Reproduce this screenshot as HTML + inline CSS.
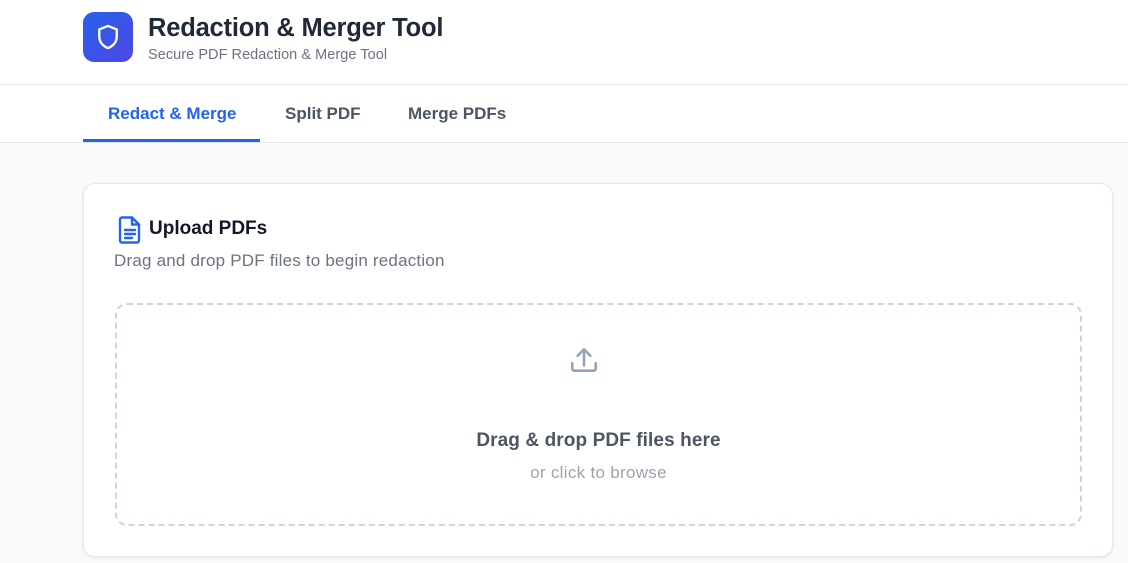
<!DOCTYPE html>
<html><head><meta charset="utf-8"><style>
*{box-sizing:border-box;margin:0;padding:0}
body{width:1128px;height:563px;overflow:hidden;background:#f8fafc;font-family:"Liberation Sans",sans-serif;position:relative}
.hdr{position:absolute;left:0;top:0;width:1128px;height:85px;background:#fff;border-bottom:1px solid #e5e7eb}
.logo{position:absolute;left:83px;top:12px;width:50px;height:50px;border-radius:11px;background:linear-gradient(135deg,#2563eb,#4f46e5)}
.logo svg{position:absolute;left:11px;top:11px}
.t1{position:absolute;left:148px;top:14px;font-size:25.5px;font-weight:bold;color:#1f2937;letter-spacing:-0.2px}
.t2{position:absolute;left:148px;top:47px;font-size:14.5px;color:#6b7280;letter-spacing:0.05px}
.nav{position:absolute;left:0;top:85px;width:1128px;height:58px;background:#fff;border-bottom:1px solid #e5e7eb}
.tab{position:absolute;top:19px;font-size:17px;font-weight:bold;color:#4b5563}
.ul{position:absolute;left:83px;top:54px;width:177px;height:3px;background:#2563eb}
.card{position:absolute;left:83px;top:183px;width:1030px;height:374px;background:#fff;border:1px solid #e2e8f0;border-radius:12px;box-shadow:0 1px 3px rgba(0,0,0,.08)}
.ct{position:absolute;left:65px;top:34px;font-size:19px;font-weight:bold;color:#111827}
.cs{position:absolute;left:30px;top:67px;font-size:17px;color:#6b7280;letter-spacing:0.2px}
.dz{position:absolute;left:31px;top:119px;width:967px;height:223px;border:2px dashed #cbd5e1;border-radius:12px}
.d1{position:absolute;left:0;width:100%;top:125px;text-align:center;font-size:19px;font-weight:bold;color:#4b5563;letter-spacing:0.1px}
.d2{position:absolute;left:0;width:100%;top:158px;text-align:center;font-size:17px;color:#9ca3af;letter-spacing:0.3px}
</style></head><body>
<div class="hdr">
<div class="logo"><svg width="28" height="28" viewBox="0 0 24 24" fill="none" stroke="#fff" stroke-width="2" stroke-linejoin="round"><path d="M12 2.5 4.5 5.5v6c0 4.8 3.2 8.3 7.5 10 4.3-1.7 7.5-5.2 7.5-10v-6z"/></svg></div>
<div class="t1">Redaction &amp; Merger Tool</div>
<div class="t2">Secure PDF Redaction &amp; Merge Tool</div>
</div>
<div class="nav">
<div class="tab" style="left:108px;color:#2563eb">Redact &amp; Merge</div>
<div class="tab" style="left:285px">Split PDF</div>
<div class="tab" style="left:408px">Merge PDFs</div>
<div class="ul"></div>
</div>
<div class="card">
<svg style="position:absolute;left:33px;top:31px" width="26" height="30" viewBox="0 0 26 30" fill="none" stroke="#2563eb" stroke-width="2.4" stroke-linejoin="round" stroke-linecap="round"><path d="M5 2.5h10l7 7v16a2 2 0 0 1-2 2H5a2 2 0 0 1-2-2v-21a2 2 0 0 1 2-2z"/><path d="M15 2.5v7h7"/><path d="M8 15h10M8 19h10M8 23h7"/></svg>
<div class="ct">Upload PDFs</div>
<div class="cs">Drag and drop PDF files to begin redaction</div>
<div class="dz">
<svg style="position:absolute;left:451px;top:39px" width="32" height="32" viewBox="0 0 30 30" fill="none" stroke="#94a3b8" stroke-width="2.4" stroke-linecap="round" stroke-linejoin="round"><path d="M15 5v15M9 11l6-6 6 6"/><path d="M4 18v5a2 2 0 0 0 2 2h18a2 2 0 0 0 2-2v-5"/></svg>
<div class="d1">Drag &amp; drop PDF files here</div>
<div class="d2">or click to browse</div>
</div>
</div>
</body></html>
